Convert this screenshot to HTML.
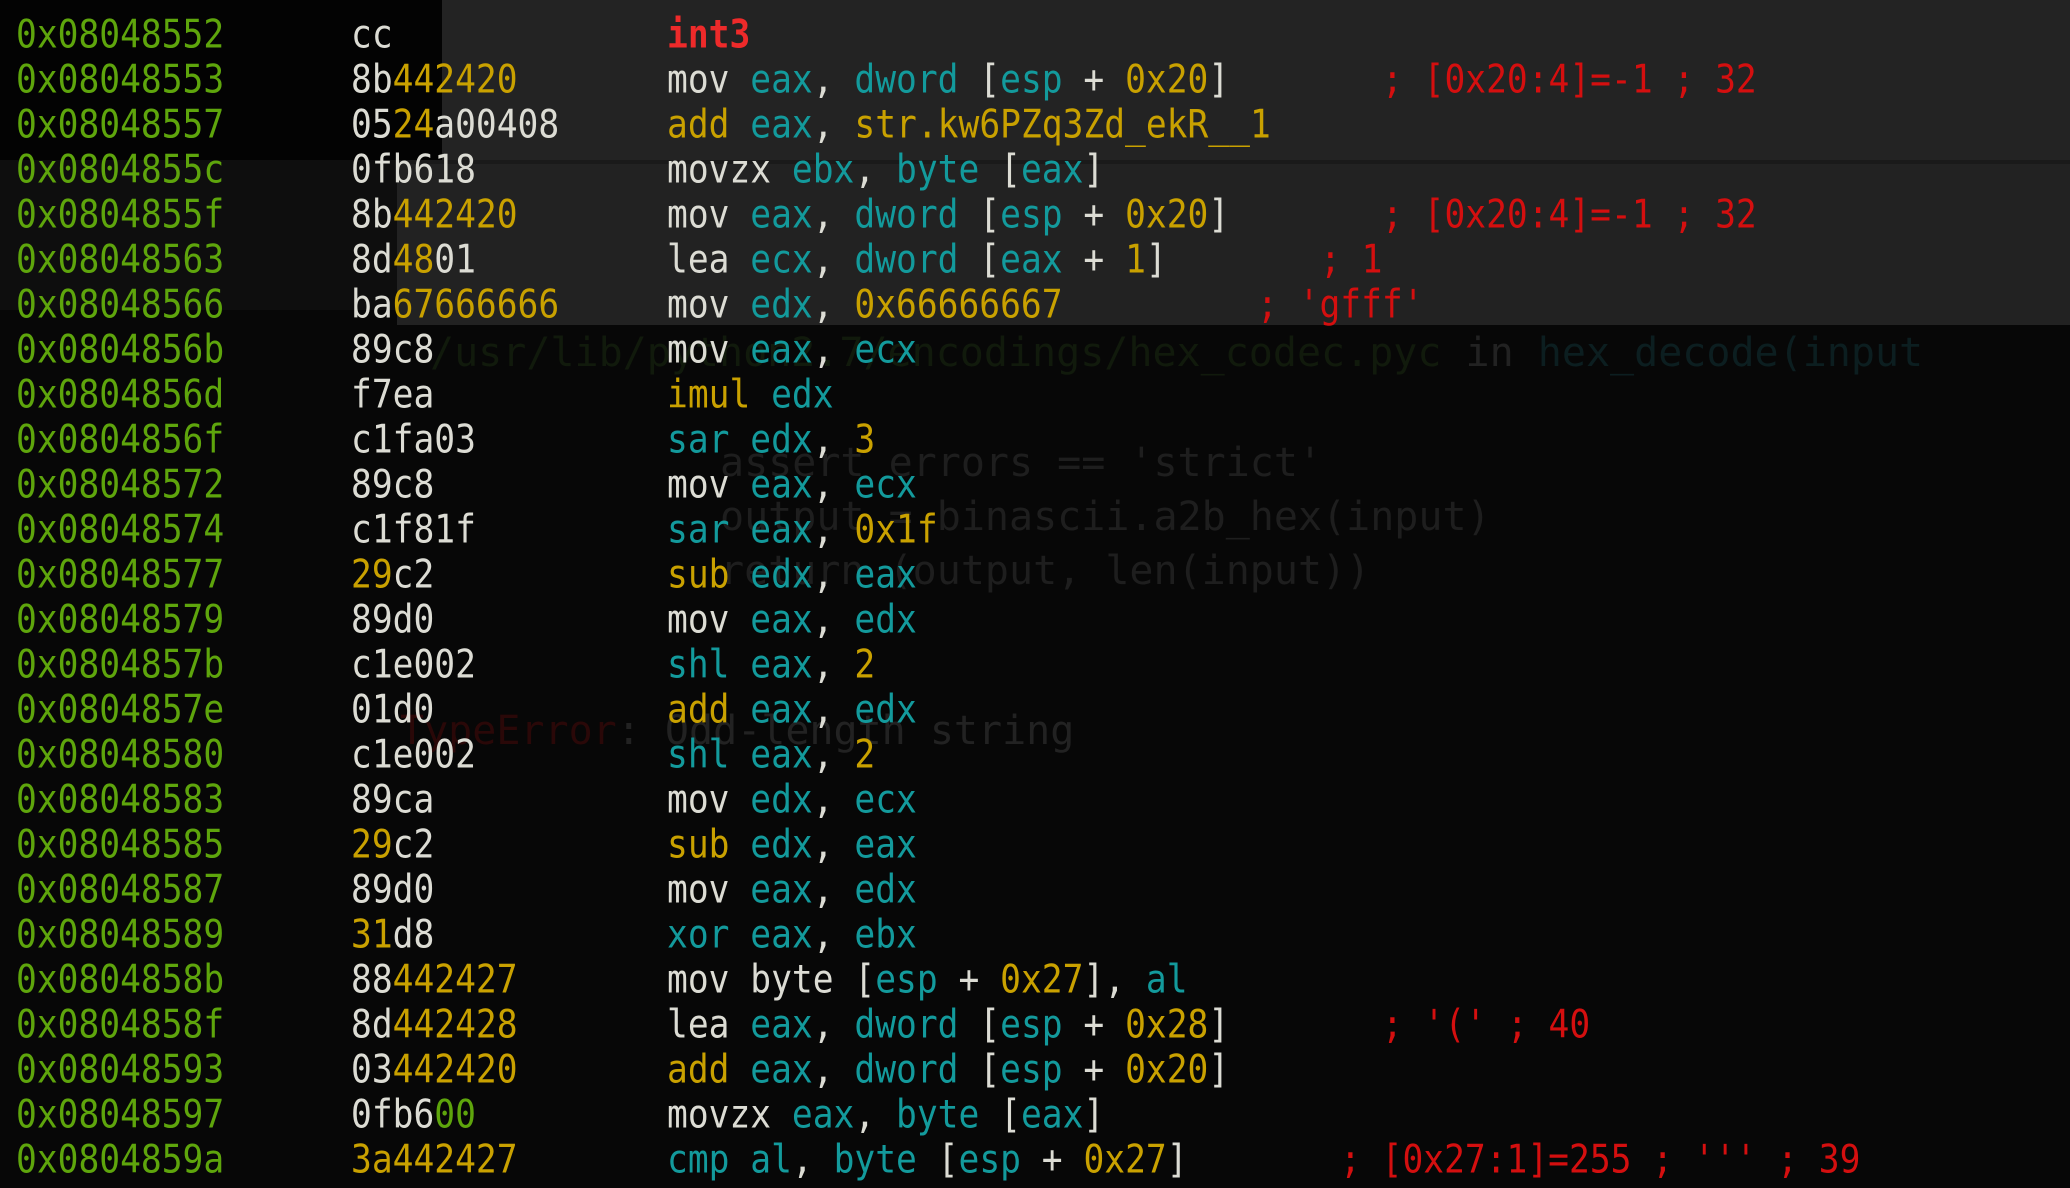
<!DOCTYPE html>
<html><head><meta charset="utf-8"><style>
html,body{margin:0;padding:0}
body{width:2070px;height:1188px;background:#070707;position:relative;overflow:hidden;font-family:"DejaVu Sans Mono","Liberation Mono",monospace;font-size:34.6px}
.bg{position:absolute}
.r{position:absolute;left:0;width:2070px;height:45px;line-height:45px;white-space:pre;transform:scaleY(1.13);transform-origin:0 50%}
.a{position:absolute;left:16px;color:#5ea50c}
.h{position:absolute;left:351px;color:#dcdcd4}
.m{position:absolute;left:667px;color:#dcdcd4}
.c{position:absolute;color:#d40f0f}
.y{color:#c9a100}.k{color:#139a9c}.w{color:#f0f0f0}.g{color:#5ea50c}
.R{color:#ee2a2a;font-weight:bold}
.gh{position:absolute;white-space:pre;font-size:40px}
</style></head><body>
<div class="bg" style="left:442px;top:0;width:1628px;height:160px;background:#232323"></div>
<div class="bg" style="left:397px;top:160px;width:1673px;height:4px;background:#1a1a1a"></div>
<div class="bg" style="left:397px;top:164px;width:1673px;height:161px;background:#222"></div>
<div class="bg" style="left:0;top:160px;width:397px;height:150px;background:#0e0e0e"></div>
<div class="bg" style="left:0;top:0;width:442px;height:160px;background:#030303"></div>
<div class="gh" style="left:430px;top:330px;color:#111a0c">/usr/lib/python2.7/encodings/hex_codec.pyc <span style="color:#222">in</span> <span style="color:#0c1e20">hex_decode(input</span></div>
<div class="gh" style="left:720px;top:440px;color:#1e1e1e">assert errors == 'strict'</div>
<div class="gh" style="left:720px;top:494px;color:#1e1e1e">output = binascii.a2b_hex(input)</div>
<div class="gh" style="left:720px;top:548px;color:#1e1e1e">return (output, len(input))</div>
<div class="gh" style="left:400px;top:708px;color:#222"><span style="color:#2a0808">TypeError</span>: Odd-length string</div>

<div class="r" style="top:13px"><span class="a">0x08048552</span><span class="h">cc</span><span class="m"><span class="R">int3</span></span></div>
<div class="r" style="top:58px"><span class="a">0x08048553</span><span class="h">8b<span class="y">442420</span></span><span class="m">mov <span class="k">eax</span>, <span class="k">dword</span> [<span class="k">esp</span> + <span class="y">0x20</span>]</span><span class="c" style="left:1382px">; [0x20:4]=-1 ; 32</span></div>
<div class="r" style="top:103px"><span class="a">0x08048557</span><span class="h">05<span class="y">24</span>a00408</span><span class="m"><span class="y">add</span> <span class="k">eax</span>, <span class="y">str.kw6PZq3Zd_ekR__1</span></span></div>
<div class="r" style="top:148px"><span class="a">0x0804855c</span><span class="h">0fb618</span><span class="m">movzx <span class="k">ebx</span>, <span class="k">byte</span> [<span class="k">eax</span>]</span></div>
<div class="r" style="top:193px"><span class="a">0x0804855f</span><span class="h">8b<span class="y">442420</span></span><span class="m">mov <span class="k">eax</span>, <span class="k">dword</span> [<span class="k">esp</span> + <span class="y">0x20</span>]</span><span class="c" style="left:1382px">; [0x20:4]=-1 ; 32</span></div>
<div class="r" style="top:238px"><span class="a">0x08048563</span><span class="h">8d<span class="y">48</span>01</span><span class="m">lea <span class="k">ecx</span>, <span class="k">dword</span> [<span class="k">eax</span> + <span class="y">1</span>]</span><span class="c" style="left:1320px">; 1</span></div>
<div class="r" style="top:283px"><span class="a">0x08048566</span><span class="h">ba<span class="y">67666666</span></span><span class="m">mov <span class="k">edx</span>, <span class="y">0x66666667</span></span><span class="c" style="left:1257px">; 'gfff'</span></div>
<div class="r" style="top:328px"><span class="a">0x0804856b</span><span class="h">89c8</span><span class="m">mov <span class="k">eax</span>, <span class="k">ecx</span></span></div>
<div class="r" style="top:373px"><span class="a">0x0804856d</span><span class="h">f7ea</span><span class="m"><span class="y">imul</span> <span class="k">edx</span></span></div>
<div class="r" style="top:418px"><span class="a">0x0804856f</span><span class="h">c1fa03</span><span class="m"><span class="k">sar</span> <span class="k">edx</span>, <span class="y">3</span></span></div>
<div class="r" style="top:463px"><span class="a">0x08048572</span><span class="h">89c8</span><span class="m">mov <span class="k">eax</span>, <span class="k">ecx</span></span></div>
<div class="r" style="top:508px"><span class="a">0x08048574</span><span class="h">c1f81f</span><span class="m"><span class="k">sar</span> <span class="k">eax</span>, <span class="y">0x1f</span></span></div>
<div class="r" style="top:553px"><span class="a">0x08048577</span><span class="h"><span class="y">29</span>c2</span><span class="m"><span class="y">sub</span> <span class="k">edx</span>, <span class="k">eax</span></span></div>
<div class="r" style="top:598px"><span class="a">0x08048579</span><span class="h">89d0</span><span class="m">mov <span class="k">eax</span>, <span class="k">edx</span></span></div>
<div class="r" style="top:643px"><span class="a">0x0804857b</span><span class="h">c1e002</span><span class="m"><span class="k">shl</span> <span class="k">eax</span>, <span class="y">2</span></span></div>
<div class="r" style="top:688px"><span class="a">0x0804857e</span><span class="h">01d0</span><span class="m"><span class="y">add</span> <span class="k">eax</span>, <span class="k">edx</span></span></div>
<div class="r" style="top:733px"><span class="a">0x08048580</span><span class="h">c1e002</span><span class="m"><span class="k">shl</span> <span class="k">eax</span>, <span class="y">2</span></span></div>
<div class="r" style="top:778px"><span class="a">0x08048583</span><span class="h">89ca</span><span class="m">mov <span class="k">edx</span>, <span class="k">ecx</span></span></div>
<div class="r" style="top:823px"><span class="a">0x08048585</span><span class="h"><span class="y">29</span>c2</span><span class="m"><span class="y">sub</span> <span class="k">edx</span>, <span class="k">eax</span></span></div>
<div class="r" style="top:868px"><span class="a">0x08048587</span><span class="h">89d0</span><span class="m">mov <span class="k">eax</span>, <span class="k">edx</span></span></div>
<div class="r" style="top:913px"><span class="a">0x08048589</span><span class="h"><span class="y">31</span>d8</span><span class="m"><span class="k">xor</span> <span class="k">eax</span>, <span class="k">ebx</span></span></div>
<div class="r" style="top:958px"><span class="a">0x0804858b</span><span class="h">88<span class="y">442427</span></span><span class="m">mov byte [<span class="k">esp</span> + <span class="y">0x27</span>], <span class="k">al</span></span></div>
<div class="r" style="top:1003px"><span class="a">0x0804858f</span><span class="h">8d<span class="y">442428</span></span><span class="m">lea <span class="k">eax</span>, <span class="k">dword</span> [<span class="k">esp</span> + <span class="y">0x28</span>]</span><span class="c" style="left:1382px">; '(' ; 40</span></div>
<div class="r" style="top:1048px"><span class="a">0x08048593</span><span class="h">03<span class="y">442420</span></span><span class="m"><span class="y">add</span> <span class="k">eax</span>, <span class="k">dword</span> [<span class="k">esp</span> + <span class="y">0x20</span>]</span></div>
<div class="r" style="top:1093px"><span class="a">0x08048597</span><span class="h">0fb6<span class="g">00</span></span><span class="m">movzx <span class="k">eax</span>, <span class="k">byte</span> [<span class="k">eax</span>]</span></div>
<div class="r" style="top:1138px"><span class="a">0x0804859a</span><span class="h"><span class="y">3a442427</span></span><span class="m"><span class="k">cmp</span> <span class="k">al</span>, <span class="k">byte</span> [<span class="k">esp</span> + <span class="y">0x27</span>]</span><span class="c" style="left:1340px">; [0x27:1]=255 ; ''' ; 39</span></div>
</body></html>
